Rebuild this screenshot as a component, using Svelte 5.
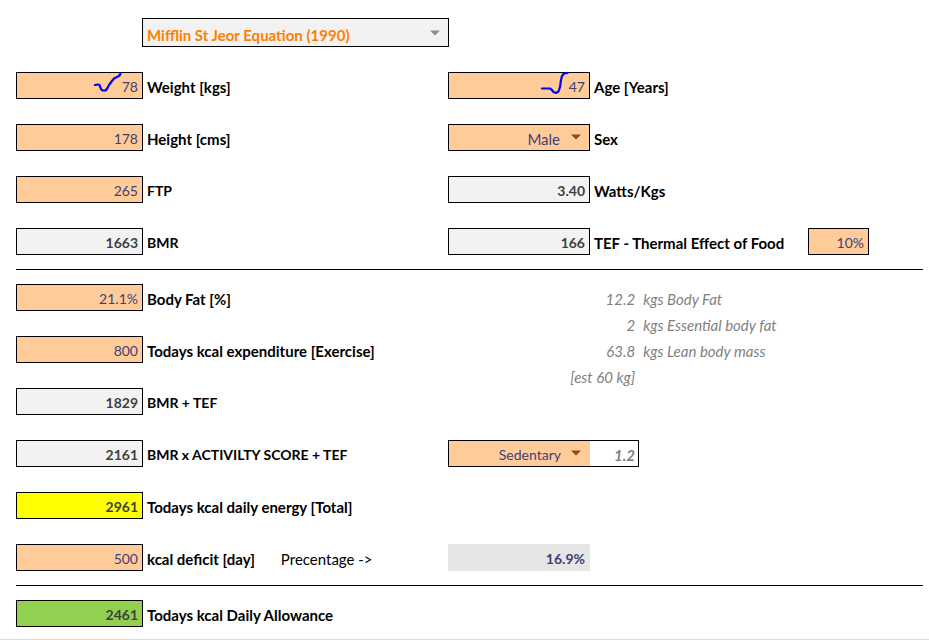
<script lang="ts">
	// Activity multipliers applied to the BMR
	const activities = [
		{ name: 'Sedentary', score: 1.2 },
		{ name: 'Light', score: 1.375 },
		{ name: 'Moderate', score: 1.55 },
		{ name: 'Very active', score: 1.725 }
	];

	const composition = [
		{ value: '12.2', text: 'kgs Body Fat' },
		{ value: '2', text: 'kgs Essential body fat' },
		{ value: '63.8', text: 'kgs Lean body mass' },
		{ value: '[est 60 kg]', text: '' }
	];

	let equation = $state('Mifflin St Jeor Equation (1990)');
	let weight = $state(78);
	let age = $state(47);
	let height = $state(178);
	let sex = $state('Male');
	let ftp = $state(265);
	let tefRate = $state('10%');
	let bodyFat = $state('21.1%');
	let exercise = $state(800);
	let activity = $state('Sedentary');
	let deficit = $state(500);

	let bmr = $derived(10 * weight + 6.25 * height - 5 * age + (sex === 'Male' ? 5 : -161));
	let tef = $derived((bmr * parseFloat(tefRate)) / 100);
	let score = $derived(activities.find((a) => a.name === activity)?.score ?? 1);
	let daily = $derived(bmr * score + tef);
	let total = $derived(daily + exercise);
	let percentage = $derived((deficit / total) * 100);
</script>

{#snippet arrow()}
	<svg class="arrow" viewBox="0 0 10 6" aria-hidden="true">
		<path d="M0 0.5H10L5 5.5Z" fill="currentColor" />
	</svg>
{/snippet}

<main>
	<header class="row">
		<div class="picker equation">
			<select bind:value={equation} aria-label="Equation">
				<option>Mifflin St Jeor Equation (1990)</option>
			</select>
			{@render arrow()}
		</div>
	</header>

	<section class="rows">
		<div class="row">
			<div class="field">
				<input id="weight" class="box" type="number" bind:value={weight} />
				<svg class="mark" viewBox="0 0 30 26" aria-hidden="true">
					<path d="M3 13L6 12.500L7.500 13L9 17L10.500 18.500H13.500L15.500 16L17 13L20 9L22 6.500L26 4.500L28 3L28.500 1" />
				</svg>
			</div>
			<label for="weight">Weight [kgs]</label>
			<div class="field">
				<input id="age" class="box" type="number" bind:value={age} />
				<svg class="mark" viewBox="0 0 30 26" aria-hidden="true">
					<path d="M3 16.500H11L13 18L14.500 20L17 21L19.500 19.500L21 15L22 8L23 4L25 1.500L28.500 1" />
				</svg>
			</div>
			<label for="age">Age [Years]</label>
		</div>
		<div class="row">
			<input id="height" class="box" type="number" bind:value={height} />
			<label for="height">Height [cms]</label>
			<div class="picker">
				<select id="sex" class="box" bind:value={sex}>
					<option>Male</option>
					<option>Female</option>
				</select>
				{@render arrow()}
			</div>
			<label for="sex">Sex</label>
		</div>
		<div class="row">
			<input id="ftp" class="box" type="number" bind:value={ftp} />
			<label for="ftp" class="caps">FTP</label>
			<output id="watts" class="box result">{(ftp / weight).toFixed(2)}</output>
			<label for="watts">Watts/Kgs</label>
		</div>
		<div class="row">
			<output id="bmr" class="box result">{Math.round(bmr)}</output>
			<label for="bmr" class="caps">BMR</label>
			<output id="tef" class="box result">{Math.round(tef)}</output>
			<label for="tef">TEF - Thermal Effect of Food</label>
			<input class="box" type="text" bind:value={tefRate} aria-label="TEF rate" />
		</div>
	</section>

	<hr />

	<section class="energy">
		<div class="rows">
			<div class="row">
				<input id="fat" class="box" type="text" bind:value={bodyFat} />
				<label for="fat">Body Fat [%]</label>
			</div>
			<div class="row">
				<input id="exercise" class="box" type="number" bind:value={exercise} />
				<label for="exercise">Todays kcal expenditure [Exercise]</label>
			</div>
			<div class="row">
				<output id="bmrtef" class="box result">{Math.round(bmr + tef)}</output>
				<label for="bmrtef" class="caps">BMR + TEF</label>
			</div>
			<div class="row">
				<output id="daily" class="box result">{Math.round(daily)}</output>
				<label for="daily" class="caps">BMR x ACTIVILTY SCORE + TEF</label>
				<div class="activity">
					<div class="picker">
						<select class="box" bind:value={activity} aria-label="Activity">
							{#each activities as a}
								<option>{a.name}</option>
							{/each}
						</select>
						{@render arrow()}
					</div>
					<output>{score}</output>
				</div>
			</div>
			<div class="row">
				<output id="total" class="box result yellow">{Math.round(total)}</output>
				<label for="total">Todays kcal daily energy [Total]</label>
			</div>
			<div class="row">
				<input id="deficit" class="box" type="number" bind:value={deficit} />
				<div class="labels">
					<label for="deficit">kcal deficit [day]</label>
					<label for="percentage" class="plain">Precentage -&gt;</label>
				</div>
				<output id="percentage" class="box result percent">{percentage.toFixed(1)}%</output>
			</div>
		</div>

		<table>
			<tbody>
				{#each composition as line}
					<tr>
						<td>{line.value}</td>
						<td>{line.text}</td>
					</tr>
				{/each}
			</tbody>
		</table>
	</section>

	<hr />

	<section class="rows">
		<div class="row">
			<output id="allowance" class="box result green">{Math.round(total - deficit)}</output>
			<label for="allowance">Todays kcal Daily Allowance</label>
		</div>
	</section>
</main>

<style>
	:global(body) {
		margin: 0;
		background: #fff;
	}

	main {
		padding: 18px 6px 12px 16px;
		border-bottom: 1px solid #d9d9d9;
		font-family: Lato, Carlito, Calibri, sans-serif;
		font-size: 15px;
		line-height: 20px;
		color: #000;
	}

	header {
		margin-bottom: 25px;
	}

	hr {
		margin: 14px 0;
		border: 0;
		border-top: 1px solid #000;
	}

	.rows {
		display: grid;
		row-gap: 25px;
	}

	.row {
		display: grid;
		grid-template-columns: 127fr 305fr 142fr 218fr 61fr 54fr;
	}

	.row > * {
		min-width: 0;
	}

	label {
		padding: 5px 0 2px 4px;
		font-weight: bold;
		white-space: nowrap;
	}

	.caps {
		font-size: 14px;
	}

	.labels {
		display: flex;
		gap: 22px;
	}

	.plain {
		font-weight: normal;
	}

	.box {
		display: block;
		box-sizing: border-box;
		width: 100%;
		height: 27px;
		margin: 0;
		padding: 4px 4px 1px;
		border: 1px solid #000;
		border-radius: 0;
		background: #fc9;
		color: #3f3f76;
		font: inherit;
		font-size: 14px;
		text-align: right;
	}

	input.box {
		padding: 3px 4px 2px;
		appearance: textfield;
	}

	input::-webkit-inner-spin-button {
		display: none;
	}

	.result {
		background: #f2f2f2;
		color: #3f3f3f;
		font-weight: bold;
	}

	.yellow {
		background: #ff0;
	}

	.green {
		background: #92d050;
	}

	.percent {
		border-color: #e6e6e6;
		background: #e6e6e6;
		color: #3f3f76;
	}

	.field,
	.picker {
		position: relative;
	}

	.mark {
		position: absolute;
		top: 0;
		right: 21px;
		width: 30px;
		height: 26px;
		fill: none;
		stroke: #00f;
		stroke-width: 2.2;
		stroke-linejoin: round;
		stroke-linecap: round;
		pointer-events: none;
	}

	.arrow {
		position: absolute;
		top: 10px;
		right: 9px;
		width: 10px;
		height: 6px;
		color: #974806;
		pointer-events: none;
	}

	select {
		appearance: none;
	}

	select.box {
		padding-right: 29px;
		font-size: 15px;
		text-align-last: right;
	}

	/* The equation box overlaps the edges of the columns beside it */
	.equation {
		grid-column: 2;
		margin: 0 -1px;
	}

	.equation select {
		display: block;
		box-sizing: border-box;
		width: 100%;
		height: 29px;
		padding: 6px 24px 1px 4px;
		border: 1px solid #000;
		border-radius: 0;
		background: #f2f2f2;
		color: #ff8001;
		font: inherit;
		font-weight: bold;
	}

	.equation .arrow {
		top: 12px;
		color: #8c8c8c;
	}

	/* Rows and the composition table share one cell */
	.energy {
		display: grid;
		grid-template-columns: 100%;
	}

	.energy > * {
		grid-area: 1 / 1;
	}

	.activity {
		display: grid;
		grid-column: 3 / span 2;
		grid-template-columns: 142fr 49fr 169fr;
	}

	.activity .box {
		border-right: 0;
		font-size: 14px;
	}

	.activity output {
		padding: 4px 3px 1px;
		border: 1px solid #000;
		border-left: 0;
		color: #7f7f7f;
		font-weight: bold;
		font-style: italic;
		text-align: right;
	}

	table {
		justify-self: end;
		align-self: start;
		width: calc(100% * 475 / 907);
		margin-top: 2px;
		border-collapse: collapse;
		table-layout: fixed;
		color: #7f7f7f;
		font-style: italic;
		line-height: 26px;
	}

	td {
		padding: 0;
	}

	td:first-child {
		width: 39.4%;
		text-align: right;
	}

	td:last-child {
		padding-left: 8px;
	}
</style>
